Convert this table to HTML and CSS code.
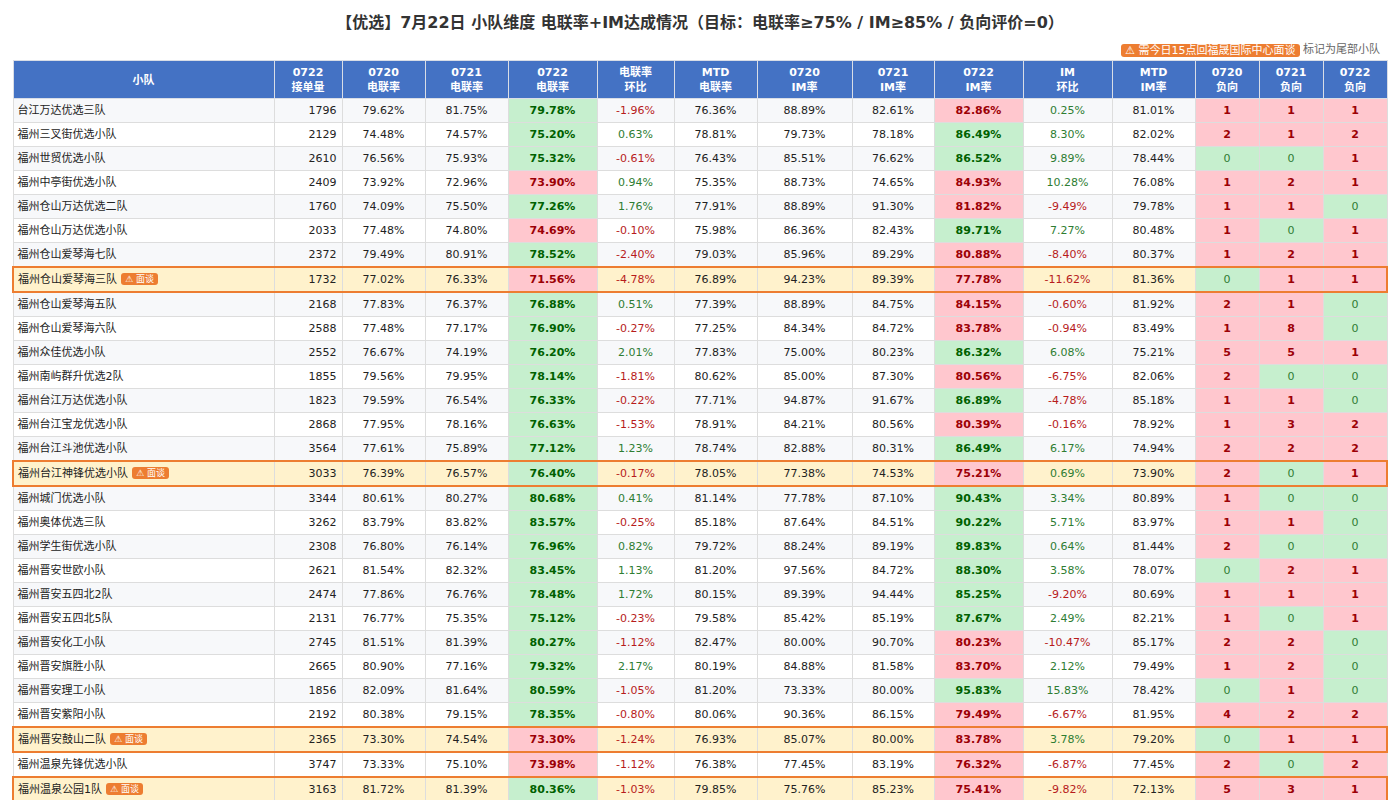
FILE: index.html
```html
<!DOCTYPE html>
<html lang="zh-CN">
<head>
<meta charset="utf-8">
<title>优选 小队维度 电联率+IM达成情况</title>
<link rel="stylesheet" href="styles.css">
</head>
<body>
<h1 class="title">【优选】7月22日 小队维度 电联率+IM达成情况（目标：电联率≥75% / IM≥85% / 负向评价=0）</h1>
<div class="legend"><span class="legend-badge">⚠ 需今日15点回福晟国际中心面谈</span> 标记为尾部小队</div>
<table class="report">
<colgroup>
<col class="c-name"><col class="c-orders"><col class="c-a"><col class="c-a"><col class="c-b"><col class="c-c"><col class="c-a"><col class="c-d"><col class="c-e"><col class="c-b"><col class="c-b"><col class="c-a"><col class="c-f"><col class="c-f"><col class="c-f">
</colgroup>
<thead>
<tr><th>小队</th><th>0722<br>接单量</th><th>0720<br>电联率</th><th>0721<br>电联率</th><th>0722<br>电联率</th><th>电联率<br>环比</th><th>MTD<br>电联率</th><th>0720<br>IM率</th><th>0721<br>IM率</th><th>0722<br>IM率</th><th>IM<br>环比</th><th>MTD<br>IM率</th><th>0720<br>负向</th><th>0721<br>负向</th><th>0722<br>负向</th></tr>
</thead>
<tbody>
<tr><td class="name">台江万达优选三队</td><td class="num">1796</td><td>79.62%</td><td>81.75%</td><td class="g">79.78%</td><td class="dn">-1.96%</td><td>76.36%</td><td>88.89%</td><td>82.61%</td><td class="r">82.86%</td><td class="up">0.25%</td><td>81.01%</td><td class="r">1</td><td class="r">1</td><td class="r">1</td></tr>
<tr><td class="name">福州三叉街优选小队</td><td class="num">2129</td><td>74.48%</td><td>74.57%</td><td class="g">75.20%</td><td class="up">0.63%</td><td>78.81%</td><td>79.73%</td><td>78.18%</td><td class="g">86.49%</td><td class="up">8.30%</td><td>82.02%</td><td class="r">2</td><td class="r">1</td><td class="r">2</td></tr>
<tr><td class="name">福州世贸优选小队</td><td class="num">2610</td><td>76.56%</td><td>75.93%</td><td class="g">75.32%</td><td class="dn">-0.61%</td><td>76.43%</td><td>85.51%</td><td>76.62%</td><td class="g">86.52%</td><td class="up">9.89%</td><td>78.44%</td><td class="z">0</td><td class="z">0</td><td class="r">1</td></tr>
<tr><td class="name">福州中亭街优选小队</td><td class="num">2409</td><td>73.92%</td><td>72.96%</td><td class="r">73.90%</td><td class="up">0.94%</td><td>75.35%</td><td>88.73%</td><td>74.65%</td><td class="r">84.93%</td><td class="up">10.28%</td><td>76.08%</td><td class="r">1</td><td class="r">2</td><td class="r">1</td></tr>
<tr><td class="name">福州仓山万达优选二队</td><td class="num">1760</td><td>74.09%</td><td>75.50%</td><td class="g">77.26%</td><td class="up">1.76%</td><td>77.91%</td><td>88.89%</td><td>91.30%</td><td class="r">81.82%</td><td class="dn">-9.49%</td><td>79.78%</td><td class="r">1</td><td class="r">1</td><td class="z">0</td></tr>
<tr><td class="name">福州仓山万达优选小队</td><td class="num">2033</td><td>77.48%</td><td>74.80%</td><td class="r">74.69%</td><td class="dn">-0.10%</td><td>75.98%</td><td>86.36%</td><td>82.43%</td><td class="g">89.71%</td><td class="up">7.27%</td><td>80.48%</td><td class="r">1</td><td class="z">0</td><td class="r">1</td></tr>
<tr><td class="name">福州仓山爱琴海七队</td><td class="num">2372</td><td>79.49%</td><td>80.91%</td><td class="g">78.52%</td><td class="dn">-2.40%</td><td>79.03%</td><td>85.96%</td><td>89.29%</td><td class="r">80.88%</td><td class="dn">-8.40%</td><td>80.37%</td><td class="r">1</td><td class="r">2</td><td class="r">1</td></tr>
<tr class="hl"><td class="name">福州仓山爱琴海三队<span class="tag">⚠ 面谈</span></td><td class="num">1732</td><td>77.02%</td><td>76.33%</td><td class="r">71.56%</td><td class="dn">-4.78%</td><td>76.89%</td><td>94.23%</td><td>89.39%</td><td class="r">77.78%</td><td class="dn">-11.62%</td><td>81.36%</td><td class="z">0</td><td class="r">1</td><td class="r">1</td></tr>
<tr><td class="name">福州仓山爱琴海五队</td><td class="num">2168</td><td>77.83%</td><td>76.37%</td><td class="g">76.88%</td><td class="up">0.51%</td><td>77.39%</td><td>88.89%</td><td>84.75%</td><td class="r">84.15%</td><td class="dn">-0.60%</td><td>81.92%</td><td class="r">2</td><td class="r">1</td><td class="z">0</td></tr>
<tr><td class="name">福州仓山爱琴海六队</td><td class="num">2588</td><td>77.48%</td><td>77.17%</td><td class="g">76.90%</td><td class="dn">-0.27%</td><td>77.25%</td><td>84.34%</td><td>84.72%</td><td class="r">83.78%</td><td class="dn">-0.94%</td><td>83.49%</td><td class="r">1</td><td class="r">8</td><td class="z">0</td></tr>
<tr><td class="name">福州众佳优选小队</td><td class="num">2552</td><td>76.67%</td><td>74.19%</td><td class="g">76.20%</td><td class="up">2.01%</td><td>77.83%</td><td>75.00%</td><td>80.23%</td><td class="g">86.32%</td><td class="up">6.08%</td><td>75.21%</td><td class="r">5</td><td class="r">5</td><td class="r">1</td></tr>
<tr><td class="name">福州南屿群升优选2队</td><td class="num">1855</td><td>79.56%</td><td>79.95%</td><td class="g">78.14%</td><td class="dn">-1.81%</td><td>80.62%</td><td>85.00%</td><td>87.30%</td><td class="r">80.56%</td><td class="dn">-6.75%</td><td>82.06%</td><td class="r">2</td><td class="z">0</td><td class="z">0</td></tr>
<tr><td class="name">福州台江万达优选小队</td><td class="num">1823</td><td>79.59%</td><td>76.54%</td><td class="g">76.33%</td><td class="dn">-0.22%</td><td>77.71%</td><td>94.87%</td><td>91.67%</td><td class="g">86.89%</td><td class="dn">-4.78%</td><td>85.18%</td><td class="r">1</td><td class="r">1</td><td class="z">0</td></tr>
<tr><td class="name">福州台江宝龙优选小队</td><td class="num">2868</td><td>77.95%</td><td>78.16%</td><td class="g">76.63%</td><td class="dn">-1.53%</td><td>78.91%</td><td>84.21%</td><td>80.56%</td><td class="r">80.39%</td><td class="dn">-0.16%</td><td>78.92%</td><td class="r">1</td><td class="r">3</td><td class="r">2</td></tr>
<tr><td class="name">福州台江斗池优选小队</td><td class="num">3564</td><td>77.61%</td><td>75.89%</td><td class="g">77.12%</td><td class="up">1.23%</td><td>78.74%</td><td>82.88%</td><td>80.31%</td><td class="g">86.49%</td><td class="up">6.17%</td><td>74.94%</td><td class="r">2</td><td class="r">2</td><td class="r">2</td></tr>
<tr class="hl"><td class="name">福州台江神锋优选小队<span class="tag">⚠ 面谈</span></td><td class="num">3033</td><td>76.39%</td><td>76.57%</td><td class="g">76.40%</td><td class="dn">-0.17%</td><td>78.05%</td><td>77.38%</td><td>74.53%</td><td class="r">75.21%</td><td class="up">0.69%</td><td>73.90%</td><td class="r">2</td><td class="z">0</td><td class="r">1</td></tr>
<tr><td class="name">福州城门优选小队</td><td class="num">3344</td><td>80.61%</td><td>80.27%</td><td class="g">80.68%</td><td class="up">0.41%</td><td>81.14%</td><td>77.78%</td><td>87.10%</td><td class="g">90.43%</td><td class="up">3.34%</td><td>80.89%</td><td class="r">1</td><td class="z">0</td><td class="z">0</td></tr>
<tr><td class="name">福州奥体优选三队</td><td class="num">3262</td><td>83.79%</td><td>83.82%</td><td class="g">83.57%</td><td class="dn">-0.25%</td><td>85.18%</td><td>87.64%</td><td>84.51%</td><td class="g">90.22%</td><td class="up">5.71%</td><td>83.97%</td><td class="r">1</td><td class="r">1</td><td class="z">0</td></tr>
<tr><td class="name">福州学生街优选小队</td><td class="num">2308</td><td>76.80%</td><td>76.14%</td><td class="g">76.96%</td><td class="up">0.82%</td><td>79.72%</td><td>88.24%</td><td>89.19%</td><td class="g">89.83%</td><td class="up">0.64%</td><td>81.44%</td><td class="r">2</td><td class="z">0</td><td class="z">0</td></tr>
<tr><td class="name">福州晋安世欧小队</td><td class="num">2621</td><td>81.54%</td><td>82.32%</td><td class="g">83.45%</td><td class="up">1.13%</td><td>81.20%</td><td>97.56%</td><td>84.72%</td><td class="g">88.30%</td><td class="up">3.58%</td><td>78.07%</td><td class="z">0</td><td class="r">2</td><td class="r">1</td></tr>
<tr><td class="name">福州晋安五四北2队</td><td class="num">2474</td><td>77.86%</td><td>76.76%</td><td class="g">78.48%</td><td class="up">1.72%</td><td>80.15%</td><td>89.39%</td><td>94.44%</td><td class="g">85.25%</td><td class="dn">-9.20%</td><td>80.69%</td><td class="r">1</td><td class="r">1</td><td class="r">1</td></tr>
<tr><td class="name">福州晋安五四北5队</td><td class="num">2131</td><td>76.77%</td><td>75.35%</td><td class="g">75.12%</td><td class="dn">-0.23%</td><td>79.58%</td><td>85.42%</td><td>85.19%</td><td class="g">87.67%</td><td class="up">2.49%</td><td>82.21%</td><td class="r">1</td><td class="z">0</td><td class="r">1</td></tr>
<tr><td class="name">福州晋安化工小队</td><td class="num">2745</td><td>81.51%</td><td>81.39%</td><td class="g">80.27%</td><td class="dn">-1.12%</td><td>82.47%</td><td>80.00%</td><td>90.70%</td><td class="r">80.23%</td><td class="dn">-10.47%</td><td>85.17%</td><td class="r">2</td><td class="r">2</td><td class="z">0</td></tr>
<tr><td class="name">福州晋安旗胜小队</td><td class="num">2665</td><td>80.90%</td><td>77.16%</td><td class="g">79.32%</td><td class="up">2.17%</td><td>80.19%</td><td>84.88%</td><td>81.58%</td><td class="r">83.70%</td><td class="up">2.12%</td><td>79.49%</td><td class="r">1</td><td class="r">2</td><td class="z">0</td></tr>
<tr><td class="name">福州晋安理工小队</td><td class="num">1856</td><td>82.09%</td><td>81.64%</td><td class="g">80.59%</td><td class="dn">-1.05%</td><td>81.20%</td><td>73.33%</td><td>80.00%</td><td class="g">95.83%</td><td class="up">15.83%</td><td>78.42%</td><td class="z">0</td><td class="r">1</td><td class="z">0</td></tr>
<tr><td class="name">福州晋安紫阳小队</td><td class="num">2192</td><td>80.38%</td><td>79.15%</td><td class="g">78.35%</td><td class="dn">-0.80%</td><td>80.06%</td><td>90.36%</td><td>86.15%</td><td class="r">79.49%</td><td class="dn">-6.67%</td><td>81.95%</td><td class="r">4</td><td class="r">2</td><td class="r">2</td></tr>
<tr class="hl"><td class="name">福州晋安鼓山二队<span class="tag">⚠ 面谈</span></td><td class="num">2365</td><td>73.30%</td><td>74.54%</td><td class="r">73.30%</td><td class="dn">-1.24%</td><td>76.93%</td><td>85.07%</td><td>80.00%</td><td class="r">83.78%</td><td class="up">3.78%</td><td>79.20%</td><td class="z">0</td><td class="r">1</td><td class="r">1</td></tr>
<tr><td class="name">福州温泉先锋优选小队</td><td class="num">3747</td><td>73.33%</td><td>75.10%</td><td class="r">73.98%</td><td class="dn">-1.12%</td><td>76.38%</td><td>77.45%</td><td>83.19%</td><td class="r">76.32%</td><td class="dn">-6.87%</td><td>77.45%</td><td class="r">2</td><td class="z">0</td><td class="r">2</td></tr>
<tr class="hl"><td class="name">福州温泉公园1队<span class="tag">⚠ 面谈</span></td><td class="num">3163</td><td>81.72%</td><td>81.39%</td><td class="g">80.36%</td><td class="dn">-1.03%</td><td>79.85%</td><td>75.76%</td><td>85.23%</td><td class="r">75.41%</td><td class="dn">-9.82%</td><td>72.13%</td><td class="r">5</td><td class="r">3</td><td class="r">1</td></tr>
</tbody>
</table>
</body>
</html>
```
FILE: styles.css
```css
html, body {
  margin: 0;
  padding: 0;
  background: #ffffff;
}
body {
  padding: 12px 12px 0;
  font-family: "DejaVu Sans", "Noto Sans CJK SC", sans-serif;
  font-size: 11px;
  color: #222222;
}
.title {
  margin: 0 0 8px;
  text-align: center;
  font-size: 16px;
  line-height: 22px;
  font-weight: bold;
  color: #333333;
}
.legend {
  text-align: right;
  font-size: 11px;
  line-height: 16px;
  color: #666666;
  padding-right: 8px;
  margin-bottom: 2px;
}
.legend-badge {
  display: inline-block;
  background: #ed7d31;
  color: #ffffff;
  line-height: 13px;
  padding: 0 4px;
  border-radius: 3px;
  vertical-align: -1px;
}
.report {
  width: 100%;
  border-collapse: collapse;
  table-layout: fixed;
}
.c-name { width: 261px; }
.c-orders { width: 68px; }
.c-a { width: 83px; }
.c-b { width: 89px; }
.c-c { width: 77px; }
.c-d { width: 95px; }
.c-e { width: 82px; }
.c-f { width: 64px; }
.report th {
  background: #4472c4;
  color: #ffffff;
  font-weight: bold;
  font-size: 11px;
  line-height: 15px;
  padding: 4px 2px 3px;
  border: 1px solid #d9dde6;
  text-align: center;
}
.report td {
  height: 23px;
  padding: 0 5px;
  border: 1px solid #dddddd;
  text-align: center;
  white-space: nowrap;
  line-height: 15px;
  background: #ffffff;
}
.report tbody tr:nth-child(odd) td {
  background: #f7f8fa;
}
.report tbody tr.hl {
  border: 2px solid #ed7d31;
}
.report tbody tr.hl td {
  background: #fff2cc;
}
.report tbody tr td.name {
  text-align: left;
  padding-left: 4px;
}
.report tbody tr td.num {
  text-align: right;
}
.report tbody tr td.g {
  background: #c6efce;
  color: #006100;
  font-weight: bold;
}
.report tbody tr td.r {
  background: #ffc7ce;
  color: #9c0006;
  font-weight: bold;
}
.report tbody tr td.z {
  background: #c6efce;
  color: #2e7d32;
}
.report tbody tr td.up {
  color: #2e7d32;
}
.report tbody tr td.dn {
  color: #b71c1c;
}
.tag {
  display: inline-block;
  margin-left: 4px;
  background: #ed7d31;
  color: #ffffff;
  font-size: 9px;
  line-height: 12px;
  padding: 0 4px;
  border-radius: 3px;
  vertical-align: 1px;
}
```
